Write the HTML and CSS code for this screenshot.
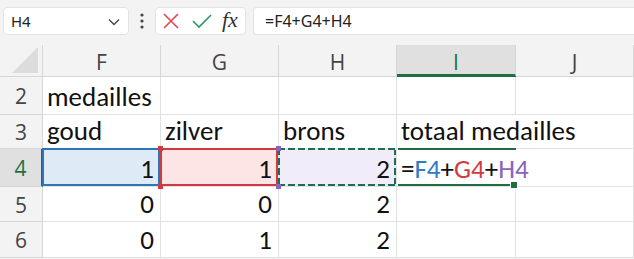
FILE: index.html
```html
<!DOCTYPE html>
<html>
<head>
    <title>medailles</title>
    <link rel="stylesheet" href="styles.css">
</head>
<body>
    <div class="toolbar">
        <div class="namebox">
            <span>H4</span>
            <svg class="chevron" width="12" height="8" viewBox="0 0 12 8"><polyline points="1,1.5 6,6.5 11,1.5" fill="none" stroke="#444" stroke-width="1.3"/></svg>
        </div>
        <svg class="dots" width="4" height="16" viewBox="0 0 4 16"><circle cx="2" cy="2" r="1.6" fill="#444"/><circle cx="2" cy="8" r="1.6" fill="#444"/><circle cx="2" cy="14" r="1.6" fill="#444"/></svg>
        <div class="fbuttons">
            <svg width="16" height="16" viewBox="0 0 16 16"><path d="M1 1 L15 15 M15 1 L1 15" stroke="#e2474b" stroke-width="1.6" fill="none"/></svg>
            <svg width="20" height="16" viewBox="0 0 20 16"><polyline points="1,8 7,14 19,2" fill="none" stroke="#2b9a5e" stroke-width="1.6"/></svg>
            <span class="fx">fx</span>
        </div>
        <div class="formula">=F4+G4+H4</div>
    </div>

    <div class="sheet">
        <!-- column headers -->
        <div class="corner"><div class="tri"></div></div>
        <div class="colhead">F</div>
        <div class="colhead">G</div>
        <div class="colhead">H</div>
        <div class="colhead active">I</div>
        <div class="colhead">J</div>

        <!-- row 2 -->
        <div class="rowhead">2</div>
        <div class="cell">medailles</div>
        <div class="cell"></div>
        <div class="cell"></div>
        <div class="cell"></div>
        <div class="cell"></div>

        <!-- row 3 -->
        <div class="rowhead">3</div>
        <div class="cell">goud</div>
        <div class="cell">zilver</div>
        <div class="cell">brons</div>
        <div class="cell overflow">totaal medailles</div>
        <div class="cell"></div>

        <!-- row 4 -->
        <div class="rowhead active">4</div>
        <div class="cell num ref-blue">1</div>
        <div class="cell num ref-red">1<span class="handle h-red top"></span><span class="handle h-red bottom"></span></div>
        <div class="cell num ref-purple">2<span class="handle h-purple top"></span><span class="handle h-purple bottom"></span></div>
        <div class="cell overflow editing">=<span class="c-blue">F4</span>+<span class="c-red">G4</span>+<span class="c-purple">H4</span><span class="caret"></span><span class="fill"></span></div>
        <div class="cell"></div>

        <!-- row 5 -->
        <div class="rowhead">5</div>
        <div class="cell num">0</div>
        <div class="cell num">0</div>
        <div class="cell num">2</div>
        <div class="cell"></div>
        <div class="cell"></div>

        <!-- row 6 -->
        <div class="rowhead">6</div>
        <div class="cell num">0</div>
        <div class="cell num">1</div>
        <div class="cell num">2</div>
        <div class="cell"></div>
        <div class="cell"></div>
    </div>
</body>
</html>
```

FILE: styles.css
```css
body {
    margin: 0;
    background-color: #f3f3f3;
    font-family: "Noto Sans", "Open Sans", sans-serif;
    overflow: hidden;
}

/* formula bar */
.toolbar {
    display: flex;
    align-items: center;
    height: 45px;
    padding: 0 0 3px 3px;
    box-sizing: border-box;
}

.namebox {
    display: flex;
    align-items: center;
    justify-content: space-between;
    width: 126px;
    height: 28px;
    box-sizing: border-box;
    padding: 0 8px 0 7px;
    background-color: #fff;
    border: 1px solid #e3e3e3;
    border-radius: 4px;
    font-size: 15px;
    color: #222;
}

.chevron {
    margin-top: 1px;
}

.dots {
    margin: 0 11px 0 11px;
}

.fbuttons {
    display: flex;
    align-items: center;
    gap: 13px;
    width: 91px;
    height: 28px;
    box-sizing: border-box;
    padding-left: 7px;
    background-color: #fff;
    border: 1px solid #e3e3e3;
    border-radius: 4px;
}

.fx {
    font-family: "Liberation Serif", serif;
    font-style: italic;
    font-size: 22px;
    color: #333;
    margin-left: -3px;
    margin-top: -3px;
}

.formula {
    flex: 1;
    height: 28px;
    margin-left: 7px;
    box-sizing: border-box;
    padding-left: 11px;
    line-height: 26px;
    background-color: #fff;
    border: 1px solid #e3e3e3;
    border-right: none;
    border-radius: 4px 0 0 4px;
    font-size: 16px;
    color: #222;
}

/* grid */
.sheet {
    display: grid;
    grid-template-columns: 43px 118px 118px 118px 119px 118px;
    grid-template-rows: 32px 38px 34px 38px 35px 36px;
    background-color: #fff;
}

.corner,
.colhead,
.rowhead {
    background-color: #f3f3f3;
    color: #444;
    box-sizing: border-box;
    border-right: 1px solid #d6d6d6;
    border-bottom: 1px solid #d6d6d6;
    display: flex;
    align-items: center;
    justify-content: center;
    font-family: "Open Sans", "Noto Sans", sans-serif;
}

.corner {
    position: relative;
}

.tri {
    position: absolute;
    right: 4px;
    bottom: 3px;
    width: 0;
    height: 0;
    border-left: 26px solid transparent;
    border-bottom: 26px solid #dcdcdc;
}

.colhead {
    font-size: 21px;
    padding-top: 3px;
}

.colhead.active {
    background-color: #e0e0e0;
    color: #1e7145;
    border-bottom: 3px solid #1e6e42;
    padding-top: 5px;
}

.rowhead {
    font-size: 21px;
    padding-top: 1px;
}

.rowhead.active {
    background-color: #e0e0e0;
    color: #1e7145;
    border-right: 2px solid #1e6e42;
}

.cell {
    position: relative;
    box-sizing: border-box;
    border-right: 1px solid #e1e1e1;
    border-bottom: 1px solid #e1e1e1;
    display: flex;
    align-items: flex-end;
    padding: 0 0 3px 4px;
    font-family: Carlito, "Noto Sans", sans-serif;
    font-size: 27px;
    line-height: 28px;
    color: #111;
    white-space: nowrap;
}

.cell.num {
    justify-content: flex-end;
    padding: 0 6px 3px 0;
}

.cell.overflow {
    border-right-color: transparent;
    z-index: 1;
}

/* formula references */
.ref-blue { background-color: #deebf7; }
.ref-red { background-color: #fde5e5; }
.ref-purple { background-color: #f1ecf9; }

.ref-blue::after,
.ref-red::after,
.ref-purple::after {
    content: "";
    position: absolute;
    top: -1px;
    left: -1px;
    right: 0;
    bottom: 0;
    border: 2px solid;
}

.ref-blue::after { border-color: #2f74b5; }
.ref-red::after { border-color: #cf3a40; }

/* copy marquee: long dark dashes, short light gaps */
.ref-purple::after {
    border: none;
    background:
        repeating-linear-gradient(90deg, #216b55 0 7px, #dfe9e4 7px 10px) left top / 100% 2px no-repeat,
        repeating-linear-gradient(90deg, #216b55 0 7px, #dfe9e4 7px 10px) left bottom / 100% 2px no-repeat,
        repeating-linear-gradient(180deg, #216b55 0 7px, #dfe9e4 7px 10px) left top / 2px 100% no-repeat,
        repeating-linear-gradient(180deg, #216b55 0 7px, #dfe9e4 7px 10px) right top / 2px 100% no-repeat;
}

.handle {
    position: absolute;
    left: -3px;
    width: 5px;
    height: 5px;
    z-index: 2;
}

.handle.top { top: -3px; }
.handle.bottom { bottom: -3px; }
.h-red { background-color: #cf3a40; }
.h-purple { background-color: #8a63bd; }

.c-blue { color: #2e7cc4; }
.c-red { color: #d33a3f; }
.c-purple { color: #8a63bd; }

.editing::before {
    content: "";
    position: absolute;
    top: -1px;
    left: 1px;
    right: -1px;
    bottom: 0;
    border-top: 2px solid #1e6e42;
    border-bottom: 2px solid #1e6e42;
}

.caret {
    display: inline-block;
    width: 1px;
    height: 31px;
    margin: 0 0 -4px 3px;
    background-color: #111;
    align-self: flex-end;
}

.fill {
    position: absolute;
    right: -3px;
    bottom: -3px;
    width: 6px;
    height: 6px;
    background-color: #1e6e42;
    border: 1px solid #fff;
}
```
